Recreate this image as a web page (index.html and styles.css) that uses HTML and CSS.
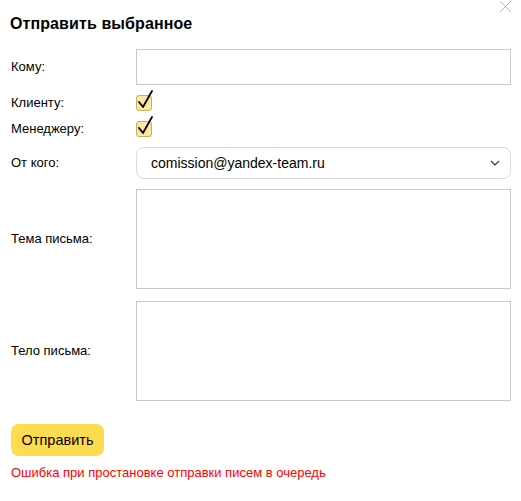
FILE: index.html
```html
<!DOCTYPE html>
<html lang="ru">
<head>
<meta charset="utf-8">
<title>Отправить выбранное</title>
<link rel="stylesheet" href="styles.css">
</head>
<body>
<div class="dialog">
  <button class="close" aria-label="Закрыть">
    <svg width="13" height="13" viewBox="0 0 13 13"><path d="M1 1L12 12M12 1L1 12" stroke="#b5b5b5" stroke-width="1" fill="none"/></svg>
  </button>
  <h1 class="title">Отправить выбранное</h1>
  <div class="form">
    <label class="label">Кому:</label>
    <div class="field"><input class="input" type="text"></div>

    <label class="label">Клиенту:</label>
    <div class="field"><span class="check"><svg width="18" height="20" viewBox="0 0 18 20"><path d="M3 12L7 17L16 1" stroke="#000" stroke-width="1.8" fill="none" stroke-linecap="round" stroke-linejoin="round"/></svg></span></div>

    <label class="label">Менеджеру:</label>
    <div class="field"><span class="check"><svg width="18" height="20" viewBox="0 0 18 20"><path d="M3 12L7 17L16 1" stroke="#000" stroke-width="1.8" fill="none" stroke-linecap="round" stroke-linejoin="round"/></svg></span></div>

    <label class="label">От кого:</label>
    <div class="field">
      <div class="select">
        <span>comission@yandex-team.ru</span>
        <svg width="10" height="6" viewBox="0 0 10 6"><path d="M1 1L5 5L9 1" stroke="#333" stroke-width="1.1" fill="none"/></svg>
      </div>
    </div>

    <label class="label">Тема письма:</label>
    <div class="field"><textarea class="area"></textarea></div>

    <label class="label last">Тело письма:</label>
    <div class="field last"><textarea class="area"></textarea></div>
  </div>
  <button class="submit">Отправить</button>
  <p class="error">Ошибка при простановке отправки писем в очередь</p>
</div>
</body>
</html>
```

FILE: styles.css
```css
* { box-sizing: border-box; }
html, body { margin: 0; padding: 0; background: #fff; }
body {
  font-family: "Liberation Sans", Arial, sans-serif;
  color: #000;
  width: 521px;
  height: 501px;
  overflow: hidden;
}
.dialog {
  position: relative;
  padding: 14px 10px 0 11px;
}
.close {
  position: absolute;
  top: 0;
  right: 9px;
  width: 13px;
  height: 13px;
  padding: 0;
  border: 0;
  background: none;
  display: flex;
}
.title {
  margin: 0 0 15px -1px;
  font-size: 16px;
  font-weight: 700;
  line-height: 20px;
  letter-spacing: 0.1px;
}
.form {
  display: grid;
  grid-template-columns: 125px 1fr;
  grid-template-rows: 36px 16px 16px 32px 100px 100px;
  row-gap: 10px;
  align-items: center;
}
.form .last { margin-top: 4px; }
.label {
  font-size: 13px;
  line-height: 16px;
}
.field { display: flex; align-items: center; height: 100%; }
.input {
  width: 100%;
  height: 36px;
  border: 1px solid #cacaca;
  border-radius: 0;
  outline: none;
  margin: 0;
}
.check {
  position: relative;
  width: 16px;
  height: 16px;
  border: 1px solid #cfae58;
  border-radius: 3px;
  background: #fce8a2;
}
.check svg {
  position: absolute;
  left: -1px;
  top: -6px;
}
.select {
  width: 100%;
  height: 32px;
  border: 1px solid #d9d9d9;
  border-radius: 8px;
  display: flex;
  align-items: center;
  justify-content: space-between;
  padding: 0 10px 0 14px;
  font-size: 14px;
}
.area {
  width: 100%;
  height: 100px;
  border: 1px solid #cacaca;
  border-radius: 0;
  resize: none;
  margin: 0;
  outline: none;
  display: block;
}
.submit {
  margin-top: 25px;
  width: 93px;
  height: 32px;
  border: 0;
  border-radius: 8px;
  background: #ffdb4d;
  font-family: "Liberation Sans", Arial, sans-serif;
  font-size: 14.5px;
  color: #000;
  padding: 0;
  display: block;
}
.error {
  margin: 9px 0 0 0;
  color: #f00;
  font-size: 13px;
  line-height: 16px;
}
```
